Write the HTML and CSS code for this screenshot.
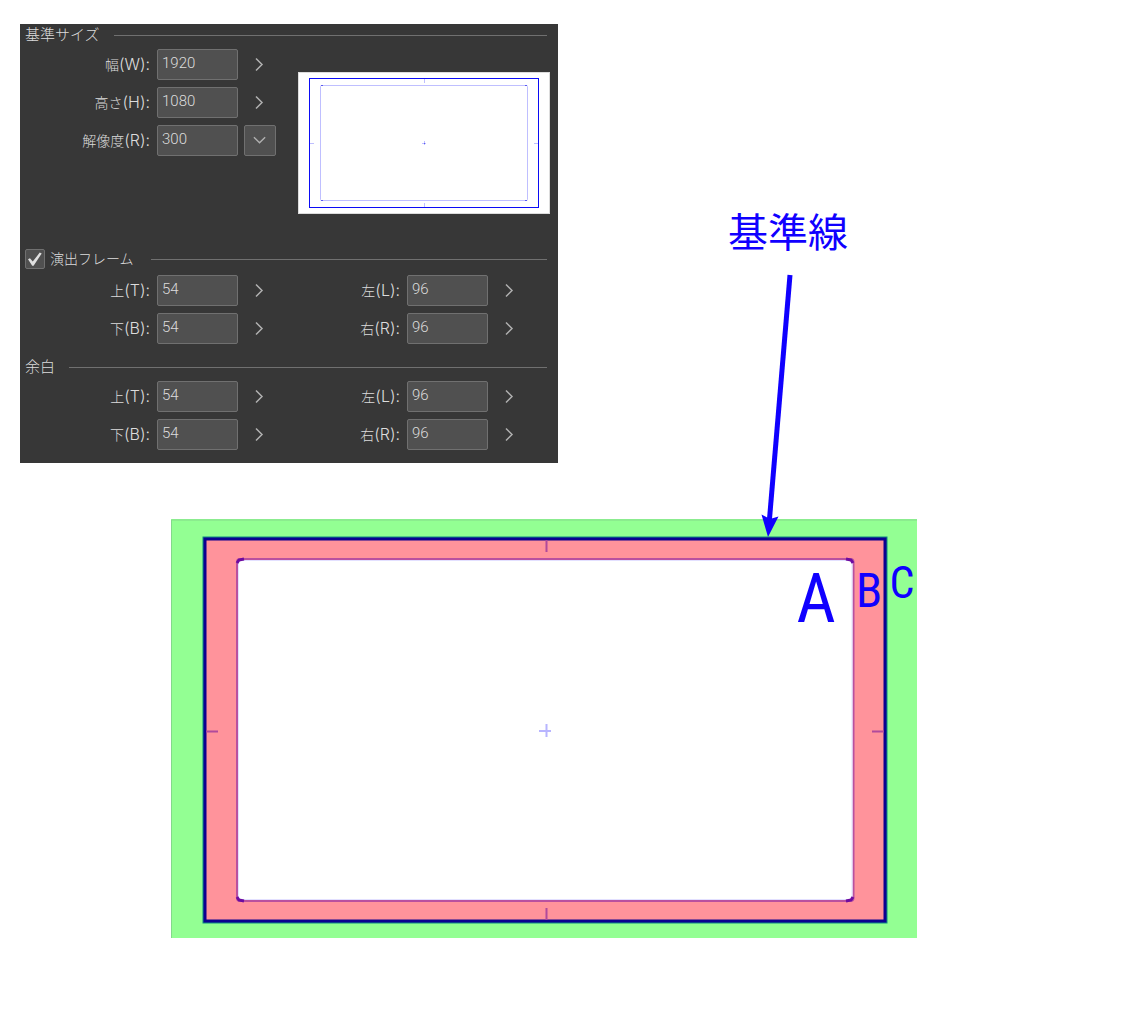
FILE: index.html
```html
<!DOCTYPE html>
<html lang="ja">
<head>
<meta charset="utf-8">
<title>基準サイズ</title>
<link rel="stylesheet" href="styles.css">
</head>
<body>
<main class="page">
  <div class="top">
    <form class="panel">
      <section class="section section-size">
        <h2 class="heading">基準サイズ</h2>
        <div class="size-body">
          <div class="fields">
            <div class="field">
              <label for="w">幅<span class="key">(W):</span></label><input id="w" type="text" value="1920">
              <button type="button" class="more" aria-label="幅"><svg viewBox="0 0 32 31"><path d="M12 9.500l6 6-6 6"/></svg></button>
            </div>
            <div class="field">
              <label for="h">高さ<span class="key">(H):</span></label><input id="h" type="text" value="1080">
              <button type="button" class="more" aria-label="高さ"><svg viewBox="0 0 32 31"><path d="M12 9.500l6 6-6 6"/></svg></button>
            </div>
            <div class="field">
              <label for="r">解像度<span class="key">(R):</span></label><input id="r" type="text" value="300">
              <button type="button" class="more drop" aria-label="解像度"><svg viewBox="0 0 32 31"><path d="M9.500 12l6 6 6-6"/></svg></button>
            </div>
          </div>
          <svg class="preview" viewBox="0 0 252 142" role="img" aria-label="プレビュー">
            <rect x=".5" y=".5" width="251" height="141" fill="#fff" stroke="#dcdcdc"/>
            <rect x="11.5" y="6.500" width="229" height="129" fill="none" stroke="#0b0bf5"/>
            <rect x="22.5" y="13.500" width="207" height="115" rx="1" fill="none" stroke="#bfbfff"/>
            <path d="M126.500 7v4M126.500 131v4M12 71.500h4M236 71.500h4M124 71.500h4M126.500 69v4" fill="none" stroke="#bfbfff"/>
            <path d="M23 13.500h2M227 13.500h2M23 128.500h2M227 128.500h2M126 71.500h1" stroke="#5a5aef"/>
          </svg>
        </div>
      </section>

      <section class="section section-frame">
        <h2 class="heading"><label class="toggle"><input type="checkbox" checked>演出フレーム</label></h2>
        <div class="grid">
          <div class="field">
            <label for="ft">上<span class="key">(T):</span></label><input id="ft" type="text" value="54">
            <button type="button" class="more" aria-label="上"><svg viewBox="0 0 32 31"><path d="M12 9.500l6 6-6 6"/></svg></button>
          </div>
          <div class="field">
            <label for="fl">左<span class="key">(L):</span></label><input id="fl" type="text" value="96">
            <button type="button" class="more" aria-label="左"><svg viewBox="0 0 32 31"><path d="M12 9.500l6 6-6 6"/></svg></button>
          </div>
          <div class="field">
            <label for="fb">下<span class="key">(B):</span></label><input id="fb" type="text" value="54">
            <button type="button" class="more" aria-label="下"><svg viewBox="0 0 32 31"><path d="M12 9.500l6 6-6 6"/></svg></button>
          </div>
          <div class="field">
            <label for="fr">右<span class="key">(R):</span></label><input id="fr" type="text" value="96">
            <button type="button" class="more" aria-label="右"><svg viewBox="0 0 32 31"><path d="M12 9.500l6 6-6 6"/></svg></button>
          </div>
        </div>
      </section>

      <section class="section">
        <h2 class="heading">余白</h2>
        <div class="grid">
          <div class="field">
            <label for="mt">上<span class="key">(T):</span></label><input id="mt" type="text" value="54">
            <button type="button" class="more" aria-label="上"><svg viewBox="0 0 32 31"><path d="M12 9.500l6 6-6 6"/></svg></button>
          </div>
          <div class="field">
            <label for="ml">左<span class="key">(L):</span></label><input id="ml" type="text" value="96">
            <button type="button" class="more" aria-label="左"><svg viewBox="0 0 32 31"><path d="M12 9.500l6 6-6 6"/></svg></button>
          </div>
          <div class="field">
            <label for="mb">下<span class="key">(B):</span></label><input id="mb" type="text" value="54">
            <button type="button" class="more" aria-label="下"><svg viewBox="0 0 32 31"><path d="M12 9.500l6 6-6 6"/></svg></button>
          </div>
          <div class="field">
            <label for="mr">右<span class="key">(R):</span></label><input id="mr" type="text" value="96">
            <button type="button" class="more" aria-label="右"><svg viewBox="0 0 32 31"><path d="M12 9.500l6 6-6 6"/></svg></button>
          </div>
        </div>
      </section>
    </form>
    <p class="callout">基準線</p>
  </div>

  <figure class="figure">
    <svg class="diagram" viewBox="0 0 747 419">
      <rect x="1" width="746" height="419" fill="#93ff93"/>
      <path d="M1.500 419V1H747" fill="none" stroke="#83d98a"/>
      <!-- base line -->
      <rect x="34.500" y="19.500" width="681" height="383" fill="#ff939b" stroke="#108a84" stroke-width="4"/>
      <rect x="35" y="20" width="680" height="382" fill="#ff939b" stroke="#0c0090" stroke-width="3"/>
      <!-- direction frame -->
      <rect x="67" y="40" width="616.500" height="342" rx="3" fill="#fff" stroke="#b9509f" stroke-width="2"/>
      <rect x="68.500" y="41.500" width="613.500" height="339" rx="2" fill="none" stroke="#e3e0ff"/>
      <path d="M67 44l2-3 5-1M683 44l-2-3-5-1M67 378l2 3 5 1M683 378l-2 3-5 1" fill="none" stroke="#6d0ba0" stroke-width="3"/>
      <path d="M376.500 21v12M376.500 389v12M36 212.500h12M702 212.500h12" fill="none" stroke="#b04a9c" stroke-width="2"/>
      <path d="M369 212h12M376.500 205v13" fill="none" stroke="#b8b5ff" stroke-width="2"/>
      <!-- arrow from the callout to the base line -->
      <path d="M620 -244L599.500 0" fill="none" stroke="#1000ff" stroke-width="5"/>
      <path d="M591.500 -4.500L600 0l8.500-2.500L598 18z" fill="#1000ff"/>
      <text class="mark mark-a" x="646" y="103" text-anchor="middle">A</text>
      <text class="mark mark-b" x="699" y="88" text-anchor="middle">B</text>
      <text class="mark mark-c" x="732" y="79" text-anchor="middle">C</text>
    </svg>
  </figure>
</main>
</body>
</html>
```
FILE: styles.css
```css
* { box-sizing: border-box; }

body {
  margin: 0;
  background: #fff;
  font-family: Roboto, "Noto Sans CJK JP", sans-serif;
}

.page { padding: 24px 20px 78px; }

.top {
  display: flex;
  align-items: flex-start;
  gap: 170px;
}

.panel {
  flex: 0 1 538px;
  padding: 0 8px 13px 5px;
  background: #373737;
  color: #dcdcdc;
  font-size: 14px;
  font-weight: 300;
}

.section-size { padding-bottom: 34px; }
.section-frame { padding-bottom: 12px; }

.heading {
  display: flex;
  align-items: center;
  gap: 14px;
  height: 22px;
  margin: 0 3px 3px 0;
  font-size: 15px;
  line-height: 20px;
  font-weight: 300;
  white-space: nowrap;
}

.heading::after {
  content: "";
  flex: 1;
  height: 1px;
  background: #707070;
}

.section-frame .heading {
  gap: 17px;
  margin-bottom: 5px;
  font-size: 14px;
}

.toggle {
  display: flex;
  align-items: center;
  gap: 5px;
}

.toggle input {
  appearance: none;
  width: 20px;
  height: 20px;
  margin: 0;
  border: 1px solid #707070;
  border-radius: 2px;
  background: #505050;
  display: grid;
  place-items: center;
}

.toggle input:checked::before {
  content: "";
  width: 14px;
  height: 14px;
  background: #e0e0e0;
  clip-path: polygon(0 52%, 14% 45%, 34% 68%, 84% 4%, 98% 10%, 40% 98%, 30% 98%);
}

.size-body {
  display: flex;
  align-items: flex-start;
  gap: 22px;
}

.fields, .grid {
  display: grid;
  gap: 7px 0;
}

.grid { grid-template-columns: 250px 1fr; }

.field {
  display: flex;
  align-items: center;
  height: 31px;
}

.field > * { flex-shrink: 0; }

.field label {
  width: 125px;
  margin-right: 7px;
  text-align: right;
  line-height: 20px;
}

.key {
  font-family: Inter, sans-serif;
  font-size: 16px;
}

.field input {
  width: 81px;
  height: 31px;
  margin: 0 6px 0 0;
  padding: 0 4px 3px;
  border: 1px solid #707070;
  border-radius: 2px;
  background: #505050;
  color: #dcdcdc;
  font: inherit;
  font-size: 15px;
}

.more {
  width: 32px;
  height: 31px;
  padding: 0;
  border: 0;
  border-radius: 2px;
  background: none;
}

.more svg {
  display: block;
  width: 100%;
  height: 100%;
  fill: none;
  stroke: #b0b0b0;
  stroke-width: 1.500;
}

.drop {
  border: 1px solid #707070;
  background: #505050;
}

.preview {
  flex: 1;
  min-width: 0;
  margin-top: 23px;
}

.callout {
  margin: 176px 0 0;
  color: #1000ff;
  font-family: "Noto Sans CJK JP", sans-serif;
  font-size: 40px;
  line-height: 60px;
  white-space: nowrap;
}

.figure {
  max-width: 747px;
  margin: 56px 0 0 150px;
}

.diagram {
  display: block;
  width: 100%;
  overflow: visible;
}

.mark {
  fill: #1000ff;
  font-family: "Roboto Condensed", "Open Sans Condensed", "DejaVu Sans Condensed", sans-serif;
}

.mark-a { font-size: 68px; }
.mark-b { font-size: 48px; }
.mark-c { font-size: 44px; }
```
